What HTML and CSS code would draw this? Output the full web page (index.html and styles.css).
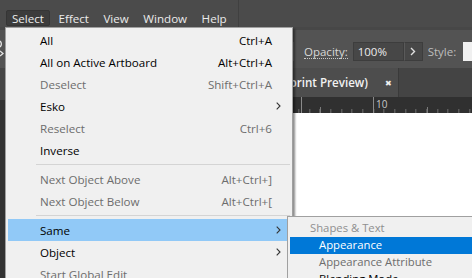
FILE: index.html
```html
<!DOCTYPE html>
<html>
<head>
<meta charset="utf-8">
<link rel="stylesheet" href="styles.css">
</head>
<body>
<div class="app">
  <div class="menubar">
    <span class="mb-item mb-active">Select</span>
    <span class="mb-item">Effect</span>
    <span class="mb-item">View</span>
    <span class="mb-item">Window</span>
    <span class="mb-item">Help</span>
    <span class="mb-sep"></span>
  </div>
  <div class="toolbar">
    <svg class="tb-icon" width="8" height="18" viewBox="0 0 8 18"><path d="M0 1 A4 4 0 0 1 0 7" fill="none" stroke="#e6e6e6" stroke-width="1.3"/><path d="M0 11 L3 13.5 L0 16" fill="none" stroke="#e6e6e6" stroke-width="1.3"/></svg>
    <span class="tb-box"></span>
    <span class="tb-label tb-underline">Opacity:</span>
    <span class="tb-input">100%</span>
    <span class="tb-btn"><svg width="6" height="9" viewBox="0 0 6 9"><path d="M1 1 L4.5 4.5 L1 8" fill="none" stroke="#e0e0e0" stroke-width="1.4"/></svg></span>
    <span class="tb-label tb-style">Style:</span>
    <span class="tb-swatch"></span>
  </div>
  <div class="workspace">
    <div class="tools">
      <div class="tools-head"></div>
      <div class="tools-body"></div>
    </div>
    <div class="doc">
      <div class="tabs">
        <div class="tab">
          <span class="tab-title">rprint Preview)</span>
          <span class="tab-close">&#x2716;</span>
        </div>
      </div>
      <div class="ruler"><span class="ruler-num">10</span></div>
      <div class="canvas"></div>
    </div>
  </div>

  <div class="menu">
    <div class="mi"><span class="mi-label">All</span><span class="mi-key">Ctrl+A</span><span class="mi-arrow"></span></div>
    <div class="mi"><span class="mi-label">All on Active Artboard</span><span class="mi-key">Alt+Ctrl+A</span><span class="mi-arrow"></span></div>
    <div class="mi mi-dis"><span class="mi-label">Deselect</span><span class="mi-key">Shift+Ctrl+A</span><span class="mi-arrow"></span></div>
    <div class="mi"><span class="mi-label">Esko</span><span class="mi-key"></span><span class="mi-arrow"><svg width="5" height="8" viewBox="0 0 5 8"><path d="M0.7 0.7 L4 4 L0.7 7.3" fill="none" stroke="#333" stroke-width="1.1"/></svg></span></div>
    <div class="mi mi-dis"><span class="mi-label">Reselect</span><span class="mi-key">Ctrl+6</span><span class="mi-arrow"></span></div>
    <div class="mi"><span class="mi-label">Inverse</span><span class="mi-key"></span><span class="mi-arrow"></span></div>
    <div class="msep"></div>
    <div class="mi mi-dis"><span class="mi-label">Next Object Above</span><span class="mi-key">Alt+Ctrl+]</span><span class="mi-arrow"></span></div>
    <div class="mi mi-dis"><span class="mi-label">Next Object Below</span><span class="mi-key">Alt+Ctrl+[</span><span class="mi-arrow"></span></div>
    <div class="msep"></div>
    <div class="mi mi-hot"><span class="mi-label">Same</span><span class="mi-key"></span><span class="mi-arrow"><svg width="5" height="8" viewBox="0 0 5 8"><path d="M0.7 0.7 L4 4 L0.7 7.3" fill="none" stroke="#333" stroke-width="1.1"/></svg></span></div>
    <div class="mi"><span class="mi-label">Object</span><span class="mi-key"></span><span class="mi-arrow"><svg width="5" height="8" viewBox="0 0 5 8"><path d="M0.7 0.7 L4 4 L0.7 7.3" fill="none" stroke="#333" stroke-width="1.1"/></svg></span></div>
    <div class="mi mi-dis"><span class="mi-label">Start Global Edit</span><span class="mi-key"></span><span class="mi-arrow"></span></div>
  </div>

  <div class="submenu">
    <div class="si si-head">Shapes &amp; Text</div>
    <div class="si si-sel">Appearance</div>
    <div class="si si-dis">Appearance Attribute</div>
    <div class="si">Blending Mode</div>
  </div>
</div>
</body>
</html>
```
FILE: styles.css
```css
html, body {
  margin: 0;
  padding: 0;
}
body {
  width: 472px;
  height: 278px;
  overflow: hidden;
  background: #535353;
  font-family: "Open Sans", "Noto Sans", sans-serif;
}
.app {
  position: relative;
  width: 472px;
  height: 278px;
  overflow: hidden;
  display: flex;
  flex-direction: column;
}

/* menubar */
.menubar {
  height: 27px;
  flex: none;
  box-sizing: border-box;
  background: #4b4b4b;
  display: flex;
  align-items: flex-end;
  padding: 0 0 1px 6px;
}
.mb-item {
  height: 16px;
  box-sizing: border-box;
  padding: 0 5px;
  margin-right: 2.5px;
  font-size: 11.6px;
  line-height: 15px;
  color: #ececec;
  border: 1px solid transparent;
}
.mb-active {
  background: #3c3c3c;
  border-color: #353535;
  border-radius: 2px;
}
.mb-sep {
  align-self: stretch;
  width: 1px;
  margin: 0 0 -1px 3px;
  background: #404040;
}

/* toolbar */
.toolbar {
  height: 41px;
  flex: none;
  box-sizing: border-box;
  background: #535353;
  border-top: 3px solid #474747;
  display: flex;
  align-items: center;
  padding: 12px 0 7px 0;
}
.tb-icon {
  flex: none;
  margin-top: -6px;
}
.tb-box {
  flex: none;
  width: 30px;
  height: 19px;
  box-sizing: border-box;
  margin-left: 256px;
  border: 1px solid #6a6a6a;
  background: #474747;
}
.tb-label {
  flex: none;
  font-size: 11.5px;
  color: #d8d8d8;
  margin-left: 10px;
  line-height: 14px;
}
.tb-underline {
  border-bottom: 1px dotted #c8c8c8;
  line-height: 13px;
}
.tb-input {
  flex: none;
  width: 51px;
  height: 19px;
  box-sizing: border-box;
  margin-left: 5px;
  padding-left: 4px;
  background: #474747;
  border: 1px solid #3d3d3d;
  font-size: 11.5px;
  line-height: 17px;
  color: #ececec;
}
.tb-btn {
  flex: none;
  width: 19px;
  height: 19px;
  box-sizing: border-box;
  background: #474747;
  border: 1px solid #3d3d3d;
  border-left-color: #5a5a5a;
  display: flex;
  align-items: center;
  justify-content: center;
}
.tb-style {
  color: #bdbdbd;
  margin-left: 5px;
}
.tb-swatch {
  flex: none;
  width: 30px;
  height: 19px;
  margin-left: 7px;
  background: #f0f0f0;
}

/* workspace */
.workspace {
  flex: 1;
  display: flex;
  min-height: 0;
}
.tools {
  flex: none;
  width: 293px;
  display: flex;
  flex-direction: column;
}
.tools-head {
  height: 32px;
  background: #464646;
  flex: none;
}
.tools-body {
  flex: 1;
  background: #323232;
}
.doc {
  flex: 1;
  display: flex;
  flex-direction: column;
  min-width: 0;
}
.tabs {
  height: 29px;
  flex: none;
  background: #444444;
  display: flex;
}
.tab {
  flex: none;
  width: 106px;
  box-sizing: border-box;
  background: #4d4d4d;
  border-right: 1px solid #3a3a3a;
  display: flex;
  align-items: center;
  justify-content: flex-end;
  overflow: hidden;
  padding-right: 6px;
}
.tab-title {
  flex: none;
  white-space: nowrap;
  font-size: 11.6px;
  font-weight: 600;
  color: #f2f2f2;
}
.tab-close {
  flex: none;
  margin-left: 17px;
  font-size: 8px;
  color: #f0f0f0;
  line-height: 10px;
}
.ruler {
  position: relative;
  height: 16px;
  flex: none;
  background-color: #303030;
  background-image:
    repeating-linear-gradient(to right, #8a8a8a 0 1px, transparent 1px 106.667px),
    repeating-linear-gradient(to right, #7a7a7a 0 1px, transparent 1px 53.333px),
    repeating-linear-gradient(to right, #6e6e6e 0 1px, transparent 1px 10.667px);
  background-size: 100% 16px, 100% 6px, 100% 4px;
  background-position: 80px 0, 27px 100%, 5.33px 100%;
  background-repeat: repeat-x;
}
.ruler-num {
  position: absolute;
  left: 83px;
  top: 1px;
  font-size: 10px;
  line-height: 12px;
  color: #c8c8c8;
  font-family: "Open Sans", sans-serif;
}
.canvas {
  flex: 1;
  background: #ffffff;
}

/* main dropdown menu */
.menu {
  position: absolute;
  left: 5px;
  top: 27px;
  width: 288px;
  height: 262px;
  box-sizing: border-box;
  background: #f0f0f0;
  border: 1px solid #a0a0a0;
  padding: 1px 5px 0 2px;
  box-shadow: 2px 2px 2px rgba(0, 0, 0, 0.45);
}
.mi {
  height: 22px;
  display: flex;
  align-items: center;
  font-size: 11.6px;
  color: #000;
}
.mi-label {
  flex: 1;
  padding-left: 32px;
  white-space: nowrap;
}
.mi-key {
  flex: none;
  white-space: nowrap;
}
.mi-arrow {
  flex: none;
  width: 15px;
  box-sizing: border-box;
  padding-left: 4px;
  display: flex;
  align-items: center;
}
.mi-dis {
  color: #6d6d6d;
}
.mi-hot {
  background: #91c9f7;
}
.msep {
  height: 1px;
  background: #d4d4d4;
  margin: 3px -3px 3px 28px;
}

/* submenu */
.submenu {
  position: absolute;
  left: 287px;
  top: 216px;
  width: 200px;
  height: 72px;
  box-sizing: border-box;
  background: #f0f0f0;
  border: 1px solid #a0a0a0;
  padding: 3px 0 0 2px;
}
.si {
  height: 17px;
  line-height: 16px;
  padding-left: 29px;
  font-size: 11.3px;
  color: #000;
  white-space: nowrap;
}
.si-head {
  padding-left: 20px;
  color: #8f8f8f;
}
.si-sel {
  background: #0078d7;
  color: #ffffff;
}
.si-dis {
  color: #6d6d6d;
}
```
